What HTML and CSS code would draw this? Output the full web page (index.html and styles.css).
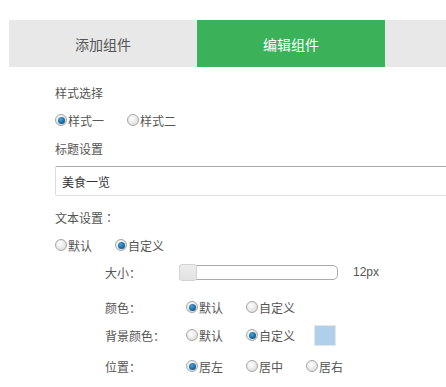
FILE: index.html
```html
<!DOCTYPE html>
<html lang="zh-CN">
<head>
    <meta charset="UTF-8">
    <meta name="viewport" content="width=device-width, initial-scale=1.0">
    <title>编辑组件</title>
    <link rel="stylesheet" href="styles.css">
</head>
<body>
    <div class="tabs">
        <div class="tab">添加组件</div>
        <div class="tab active">编辑组件</div>
    </div>

    <div class="panel">
        <div class="row label-row">样式选择</div>
        <div class="row radio-row gap-sm">
            <label class="opt"><span class="radio checked"></span>样式一</label>
            <label class="opt"><span class="radio"></span>样式二</label>
        </div>

        <div class="row label-row gap-sm">标题设置</div>
        <div class="title-input">美食一览</div>

        <div class="row label-row gap-md">文本设置<span class="colon">：</span></div>
        <div class="row radio-row gap-sm">
            <label class="opt"><span class="radio"></span>默认</label>
            <label class="opt"><span class="radio checked"></span>自定义</label>
        </div>

        <div class="sub-row size-row">
            <span class="sub-label">大小<span class="colon">：</span></span>
            <div class="slider"><span class="thumb"></span></div>
            <span class="size-value">12px</span>
        </div>

        <div class="sub-row gap-lg">
            <span class="sub-label">颜色<span class="colon">：</span></span>
            <label class="opt"><span class="radio checked"></span>默认</label>
            <label class="opt"><span class="radio"></span>自定义</label>
        </div>

        <div class="sub-row gap-md2">
            <span class="sub-label">背景颜色<span class="colon">：</span></span>
            <label class="opt"><span class="radio"></span>默认</label>
            <label class="opt"><span class="radio checked"></span>自定义</label>
            <span class="swatch"></span>
        </div>

        <div class="sub-row gap-md">
            <span class="sub-label">位置<span class="colon">：</span></span>
            <label class="opt"><span class="radio checked"></span>居左</label>
            <label class="opt"><span class="radio"></span>居中</label>
            <label class="opt"><span class="radio"></span>居右</label>
        </div>
    </div>
</body>
</html>
```

FILE: styles.css
```css
body {
    font-family: "Liberation Sans", "Noto Sans CJK SC", sans-serif;
    font-size: 12px;
    color: #555;
    margin: 0;
    padding: 0;
    background: #fff;
}
.tabs {
    display: flex;
    margin: 20px 0 0 9px;
    height: 47px;
    background-color: #e8e8e8;
}
.tab {
    width: 188px;
    display: flex;
    align-items: center;
    justify-content: center;
    font-size: 14px;
    color: #555;
}
.tab.active {
    background-color: #3bb15a;
    color: #fff;
}
.panel {
    padding: 15px 0 0 55px;
}
.row {
    height: 20px;
    display: flex;
    align-items: center;
}
.gap-sm {
    margin-top: 8px;
}
.gap-md {
    margin-top: 11px;
}
.gap-md2 {
    margin-top: 8px;
}
.gap-lg {
    margin-top: 15px;
}
.label-row {
    color: #555;
}
.colon {
    font-family: "Noto Sans CJK TC", sans-serif;
}
.opt {
    display: inline-flex;
    align-items: center;
    margin-right: 23px;
    color: #555;
}
.radio {
    position: relative;
    box-sizing: border-box;
    width: 12px;
    height: 12px;
    margin-right: 1px;
    border-radius: 50%;
    border: 1px solid #a6a6a6;
    background: radial-gradient(circle at 40% 35%, #fff 0%, #e2e2e2 70%, #c9c9c9 100%);
}
.radio.checked::after {
    content: "";
    position: absolute;
    left: 1.5px;
    top: 1.5px;
    width: 7px;
    height: 7px;
    border-radius: 50%;
    background: radial-gradient(circle at 40% 35%, #4aa3d8 0%, #15679f 60%, #0d3f66 100%);
}
.title-input {
    margin-top: 8px;
    height: 30px;
    box-sizing: border-box;
    border: 1px solid #ddd;
    border-top-color: #aaa;
    border-right: none;
    border-radius: 2px 0 0 2px;
    padding-left: 6px;
    display: flex;
    align-items: center;
    color: #333;
}
.sub-row {
    height: 20px;
    display: flex;
    align-items: center;
    padding-left: 50px;
}
.size-row {
    margin-top: 7px;
}
.sub-label {
    width: 81px;
    color: #555;
}
.slider {
    position: relative;
    box-sizing: border-box;
    width: 159px;
    height: 15px;
    margin-left: -7px;
    border: 1px solid #aaa;
    border-radius: 2px 5px 5px 2px;
}
.thumb {
    position: absolute;
    left: -1px;
    top: -2px;
    box-sizing: border-box;
    width: 18px;
    height: 17px;
    border: 1px solid #d3d3d3;
    border-radius: 3px;
    background: linear-gradient(#ececec, #e2e2e2);
}
.size-value {
    margin-left: 15px;
    color: #555;
}
.swatch {
    box-sizing: border-box;
    width: 22px;
    height: 21px;
    margin-left: -4px;
    border: 1px solid #e6e6e6;
    background-color: #aed0ea;
}
```
